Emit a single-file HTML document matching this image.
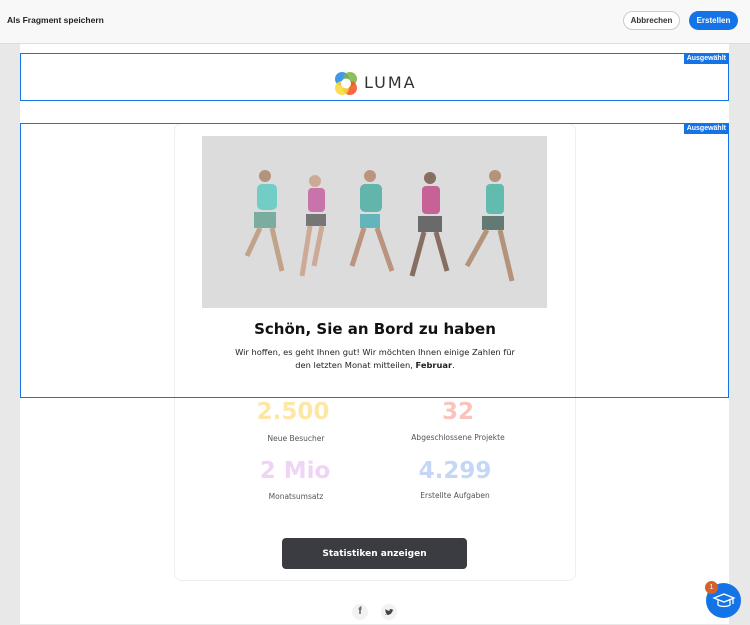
<!DOCTYPE html>
<html><head><meta charset="utf-8"><style>
*{box-sizing:border-box;margin:0;padding:0}
body{width:750px;height:624px;overflow:hidden;background:#e8e8e8;font-family:"Liberation Sans",sans-serif;position:relative}
.hdr{position:absolute;left:0;top:0;width:750px;height:44px;background:#f8f8f8;border-bottom:1px solid #ddd}
.hdr .t{position:absolute;left:7px;top:15px;font-size:8.5px;font-weight:bold;color:#222}
.btn{position:absolute;top:11px;height:19px;border-radius:10px;font-size:8px;font-weight:bold;display:flex;align-items:center;justify-content:center}
.b1{left:623px;width:57px;border:1.5px solid #ccc;background:#fff;color:#333}
.b2{left:689px;width:49px;background:#1473e6;color:#fff}
.panel{position:absolute;left:20px;top:44px;width:709px;height:580px;background:#fff}
.sel{position:absolute;border:1.5px solid #1473e6}
.tag{position:absolute;right:-1px;top:-1px;background:#1473e6;color:#fff;font-size:7px;padding:2px 3px;font-weight:bold}
.card{position:absolute;left:174px;top:123px;width:402px;height:458px;border:1px solid #eee;border-radius:8px;background:#fff}
.c{position:absolute;text-align:center}
.num{font-size:23px;font-weight:bold;font-family:"DejaVu Sans",sans-serif}
.lbl{font-size:7.5px;color:#555;font-family:"DejaVu Sans",sans-serif}
</style></head><body>
<div class="hdr"><div class="t">Als Fragment speichern</div>
<div class="btn b1">Abbrechen</div><div class="btn b2">Erstellen</div></div>
<div class="panel"></div>
<div class="card"></div>
<div style="position:absolute;left:333px;top:70px">
<svg width="26" height="27" viewBox="0 0 26 27"><circle cx="9" cy="9" r="7" fill="#1e88e5" opacity=".85"/><circle cx="17" cy="9" r="7" fill="#7cb342" opacity=".85"/><circle cx="17" cy="18" r="7" fill="#f4511e" opacity=".85"/><circle cx="9" cy="18" r="7" fill="#fdd835" opacity=".85"/><circle cx="13" cy="13.5" r="5" fill="#fff"/></svg></div>
<div style="position:absolute;left:364px;top:73px;font-size:16px;letter-spacing:2px;color:#333;font-family:'DejaVu Sans',sans-serif">LUMA</div>
<div style="position:absolute;left:202px;top:136px;width:345px;height:172px;background:#dcdcdc">
<svg width="345" height="172" viewBox="0 0 345 172">
<g opacity=".75">
<circle cx="63" cy="40" r="6" fill="#a67b5b"/><rect x="55" y="48" width="20" height="26" rx="5" fill="#4fc8c0"/><rect x="52" y="76" width="22" height="16" fill="#5a9e8a"/><path d="M58 92 L45 120 M70 92 L80 135" stroke="#b8906e" stroke-width="5"/>
<circle cx="113" cy="45" r="6" fill="#c89a80"/><rect x="106" y="52" width="17" height="24" rx="4" fill="#c2509a"/><rect x="104" y="78" width="20" height="12" fill="#555"/><path d="M108 90 L100 140 M120 90 L112 130" stroke="#c89a80" stroke-width="5"/>
<circle cx="168" cy="40" r="6" fill="#b07d60"/><rect x="158" y="48" width="22" height="28" rx="5" fill="#3aa89a"/><rect x="158" y="78" width="20" height="14" fill="#3aa8b0"/><path d="M162 92 L150 130 M175 92 L190 135" stroke="#b07d60" stroke-width="5"/>
<circle cx="228" cy="42" r="6" fill="#6a4a3a"/><rect x="220" y="50" width="18" height="28" rx="4" fill="#c03a80"/><rect x="216" y="80" width="24" height="16" fill="#444"/><path d="M222 96 L210 140 M234 96 L245 135" stroke="#6a4a3a" stroke-width="5"/>
<circle cx="293" cy="40" r="6" fill="#a67b5b"/><rect x="284" y="48" width="18" height="30" rx="4" fill="#38b0a0"/><rect x="280" y="80" width="22" height="14" fill="#3a5a50"/><path d="M285 94 L265 130 M298 94 L310 145" stroke="#a67b5b" stroke-width="5"/>
</g></svg></div>
<div class="c" style="left:174px;width:402px;top:320px;font-size:15px;font-weight:bold;color:#111;font-family:'DejaVu Sans',sans-serif">Schön, Sie an Bord zu haben</div>
<div class="c" style="left:174px;width:402px;top:346px;font-size:8.3px;line-height:13px;color:#222;font-family:'DejaVu Sans',sans-serif">Wir hoffen, es geht Ihnen gut! Wir möchten Ihnen einige Zahlen für<br>den letzten Monat mitteilen, <b>Februar</b>.</div>
<div class="sel" style="left:20px;top:53px;width:709px;height:48px"><div class="tag">Ausgewählt</div></div>
<div class="sel" style="left:20px;top:123px;width:709px;height:275px"><div class="tag">Ausgewählt</div></div>
<div class="c num" style="left:223px;width:140px;top:399px;color:#fde7a6">2.500</div>
<div class="c lbl" style="left:226px;width:140px;top:434px">Neue Besucher</div>
<div class="c num" style="left:388px;width:140px;top:399px;color:#f8c4bc">32</div>
<div class="c lbl" style="left:388px;width:140px;top:433px">Abgeschlossene Projekte</div>
<div class="c num" style="left:225px;width:140px;top:458px;color:#f0d4f6">2 Mio</div>
<div class="c lbl" style="left:226px;width:140px;top:492px">Monatsumsatz</div>
<div class="c num" style="left:385px;width:140px;top:458px;color:#c6d6f6">4.299</div>
<div class="c lbl" style="left:385px;width:140px;top:491px">Erstellte Aufgaben</div>
<div style="position:absolute;left:282px;top:538px;width:185px;height:31px;background:#3b3c42;border-radius:4px;color:#fff;font-size:9px;font-weight:bold;display:flex;align-items:center;justify-content:center;font-family:'DejaVu Sans',sans-serif">Statistiken anzeigen</div>
<div style="position:absolute;left:352px;top:604px;width:16px;height:16px;border-radius:50%;background:#f2f2f2;color:#555;font-size:10px;font-weight:bold;text-align:center;line-height:16px">f</div>
<div style="position:absolute;left:381px;top:604px;width:16px;height:16px;border-radius:50%;background:#f2f2f2"><svg width="16" height="16" viewBox="0 0 16 16"><path d="M4 10c2 1.5 6 1.5 7.5-3l1-1-1 .2.6-.9-1 .3c-1-1.2-3-.4-2.600 1.300C7 6.8 5.5 6 4.5 5c-.4 1 0 2 .6 2.4l-.8-.1c0 .8.6 1.5 1.2 1.6l-.7.1c.3.6.9 1 1.5 1-.7.5-1.5.7-2.3.6z" fill="#444"/></svg></div>
<div style="position:absolute;left:706px;top:583px;width:35px;height:35px;border-radius:50%;background:#1473e6">
<svg width="35" height="35" viewBox="0 0 35 35"><path d="M8 15l10-4 10 4-10 4z M12 17v5c3 2 9 2 12 0v-5 M27 15v6" fill="none" stroke="#fff" stroke-width="1.3"/></svg></div>
<div style="position:absolute;left:705px;top:581px;width:13px;height:13px;border-radius:50%;background:#d4622a;color:#fff;font-size:7px;text-align:center;line-height:13px">1</div>
</body></html>
